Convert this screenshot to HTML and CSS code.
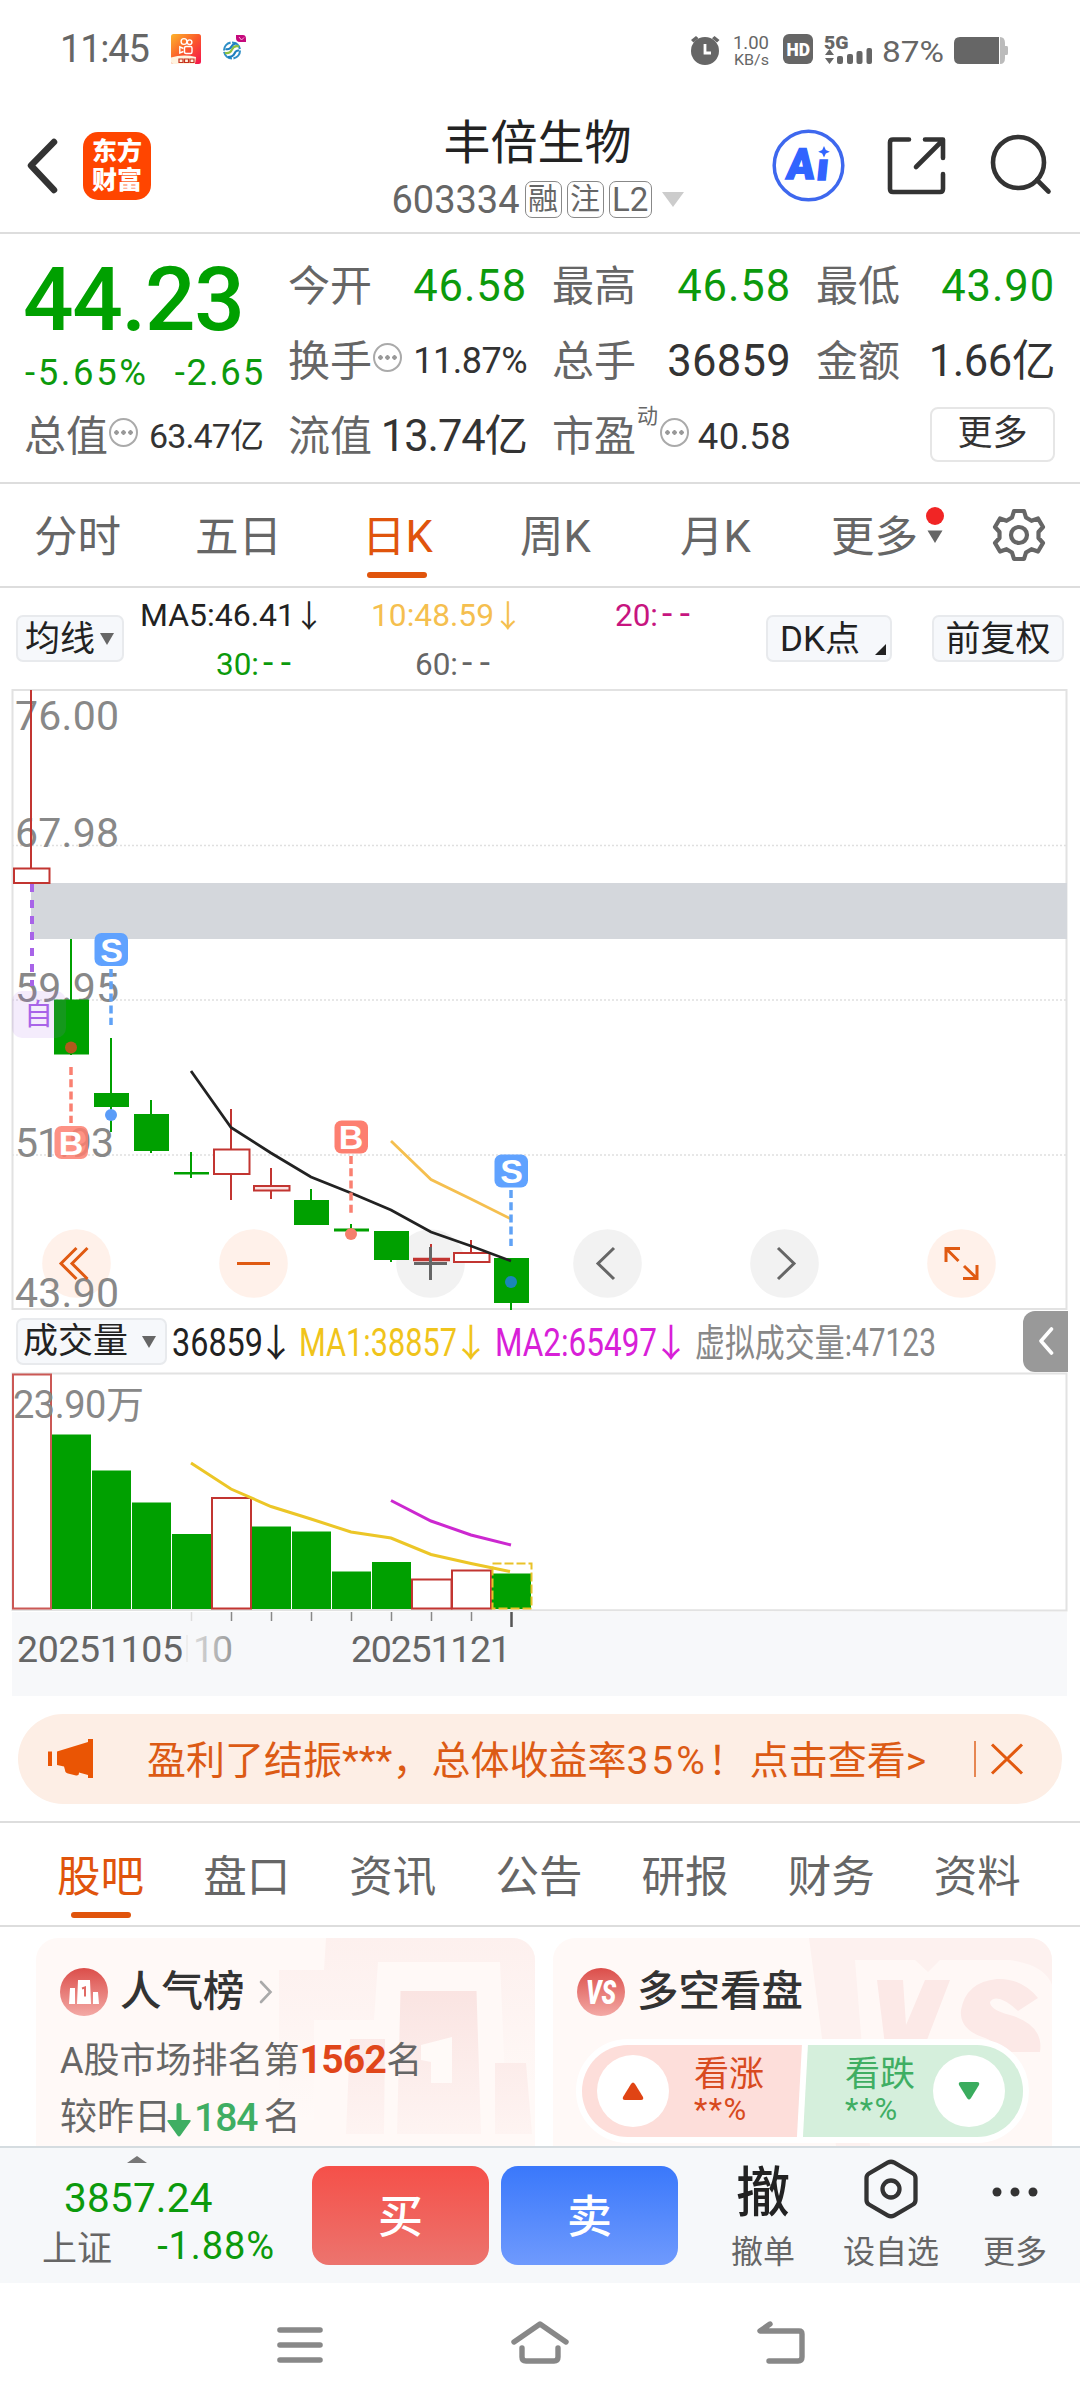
FILE: index.html
```html
<!DOCTYPE html>
<html lang="zh-CN">
<head>
<meta charset="utf-8">
<title>丰倍生物 603334</title>
<link rel="stylesheet" href="styles.css">
</head>
<body>
<div class="app">

<div class="status">
  <span class="clock">11:45</span>
  <svg class="st-app" width="30" height="30" viewBox="0 0 30 30">
    <defs><linearGradient id="ks" x1="0" y1="0" x2="1" y2="1"><stop offset="0" stop-color="#fdb52c"/><stop offset=".5" stop-color="#fb5a2a"/><stop offset="1" stop-color="#f5124e"/></linearGradient></defs>
    <rect width="30" height="30" rx="2.5" fill="url(#ks)"/>
    <g fill="none" stroke="#fff" stroke-width="1.4"><circle cx="13" cy="7.5" r="2.9"/><circle cx="18.6" cy="8.2" r="2.3"/><rect x="13.5" y="12.5" width="7.5" height="7" rx="1.5"/><path d="M12.500 14.500 L8.800 12.800 V19 L12.500 17.500"/></g>
    <path d="M0 23.500 Q12 20 25 23 L24 30 H2.500 Q0 30 0 27.500Z" fill="#fff3e0"/>
    <path d="M8 25h4v3.500h-4zM13.500 25h4v3.500h-4zM19 25h4v3.500h-4z" fill="none" stroke="#c5311c" stroke-width="1.2"/>
  </svg>
  <svg class="st-cm" width="26" height="26" viewBox="0 0 26 26">
    <g fill="none" stroke-width="2.100"><circle cx="10" cy="15.500" r="8" stroke="#2f8fc6" stroke-dasharray="11 1.500"/><path d="M3 18q5 1 7-3.500t7-3" stroke="#8cc043"/><path d="M3.500 14q4 1 6-2.500t5-3M6 22q5 0 6.500-3.500t4.500-3" stroke="#1d7fc0"/></g>
    <path d="M14 0h7q3 0 3 4v3h-6q-4 0-4-4z" fill="#c5097c"/><path d="M17 2l2.500 3 2.500-2.500" stroke="#f7b6dc" fill="none"/>
  </svg>
  <svg class="st-right" width="330" height="40" viewBox="685 30 330 40">
    <g fill="#666">
      <circle cx="705" cy="51" r="14"/><path d="M691 40l5-4 2.500 2.300-5 4.200zM719.500 40l-5-4-2.500 2.300 5 4.200z"/>
      <path d="M705 44v9h6" stroke="#fff" stroke-width="2.800" fill="none"/>
      <text x="733" y="49" font-size="18.500" textLength="36" lengthAdjust="spacingAndGlyphs">1.00</text>
      <text x="734" y="65" font-size="15.500" textLength="35" lengthAdjust="spacingAndGlyphs">KB/s</text>
      <rect x="783" y="34" width="30" height="30" rx="6"/>
      <text x="786.500" y="56" font-size="19" font-weight="900" fill="#fff" textLength="23.500" lengthAdjust="spacingAndGlyphs">HD</text>
      <text x="824" y="48.500" font-size="19" font-weight="900" textLength="24.500" lengthAdjust="spacingAndGlyphs">5G</text>
      <path d="M829.500 49l4.500 6h-9zM829.500 64l4.500-6h-9z"/>
      <rect x="837" y="56" width="6" height="8" rx="2"/><rect x="847" y="54" width="6" height="10" rx="2"/><rect x="856.500" y="51" width="6" height="13" rx="2"/><rect x="866.500" y="48" width="5.500" height="16" rx="2"/>
      <text x="882" y="62" font-size="30" textLength="62" lengthAdjust="spacingAndGlyphs">87%</text>
      <path d="M1000 37q5 0 5 6v3h2q1 0 1 2v5q0 2-1 2h-2v3q0 6-5 6z" fill="#bbb"/>
      <path d="M960 37h39v27h-39q-6 0-6-6v-15q0-6 6-6z"/>
    </g>
  </svg>
</div>

<header class="head">
  <svg class="back" width="34" height="56" viewBox="0 0 34 56"><path d="M29 4L6 27.500 29 52" fill="none" stroke="#333" stroke-width="6.500" stroke-linecap="round" stroke-linejoin="round"/></svg>
  <div class="logo"><span>东方</span><span>财富</span></div>
  <div class="title">
    <h1>丰倍生物</h1>
    <div class="code"><span class="num">603334</span><i>融</i><i>注</i><i class="l2">L2</i><b class="tri"></b></div>
  </div>
  <svg class="head-icons" width="290" height="80" viewBox="765 127 290 80">
    <circle cx="808.500" cy="166.500" r="34.300" fill="#fff" stroke="#3e68ee" stroke-width="3.500"/>
    <g fill="#3164ff" stroke="#3164ff" stroke-width="1.500" font-weight="900" transform="translate(0 180) skewX(-6)"><text x="785.500" y="0" font-size="43" textLength="28" lengthAdjust="spacingAndGlyphs">A</text><text x="815.500" y="1" font-size="38" textLength="12" lengthAdjust="spacingAndGlyphs">ı</text></g>
    <path d="M824 147l1.800 4 4 1.800-4 1.800-1.800 4-1.800-4-4-1.800 4-1.800z" fill="#3164ff"/>
    <g fill="none" stroke="#333" stroke-width="4.600" stroke-linecap="round" stroke-linejoin="round">
      <path d="M909 140.500H893q-3 0-3 3V190q0 3 3 3H940q3 0 3-3V175M925 140.500H943V159M942 142L916 168"/>
      <circle cx="1018.500" cy="163.500" r="25.500"/><path d="M1037 181l11.500 11.500"/>
    </g>
  </svg>
</header>

<section class="quote">
  <div class="qcol">
    <div class="big">44.23</div>
    <div class="chg"><span class="pct">-5.65%</span><span>-2.65</span></div>
    <div class="q last"><label>总值</label><u></u><span class="v s34">63.47亿</span></div>
  </div>
  <div class="qcol">
    <div class="q"><label>今开</label><span class="v g">46.58</span></div>
    <div class="q"><label>换手</label><u></u><span class="v s36">11.87%</span></div>
    <div class="q"><label>流值</label><span class="v tight">13.74亿</span></div>
  </div>
  <div class="qcol">
    <div class="q"><label>最高</label><span class="v g">46.58</span></div>
    <div class="q"><label>总手</label><span class="v">36859</span></div>
    <div class="q"><label>市盈</label><sup>动</sup><u></u><span class="v s37">40.58</span></div>
  </div>
  <div class="qcol">
    <div class="q"><label>最低</label><span class="v g">43.90</span></div>
    <div class="q"><label>金额</label><span class="v amt">1.66亿</span></div>
    <div class="q"><button class="more">更多</button></div>
  </div>
</section>

<nav class="ktabs">
  <span>分时</span><span>五日</span><span class="on">日K</span><span>周K</span><span>月K</span>
  <span class="kmore">更多<svg width="18" height="40" viewBox="0 0 18 40"><circle cx="9" cy="10" r="9" fill="#f12525"/><path d="M1.500 24.500h15L9 37z" fill="#666"/></svg></span>
  <svg class="gear" width="56" height="56" viewBox="-28 -28 56 56"><g fill="none" stroke="#666" stroke-width="4.200" stroke-linejoin="round"><path d="M-5-24H5L7-17.500 12.500-14.200 19-16.500 24-8 19.500-3V3L24 8 19 16.500 12.500 14.200 7 17.500 5 24H-5L-7 17.500-12.500 14.200-19 16.500-24 8-19.500 3V-3L-24-8-19-16.500-12.500-14.200-7-17.500z"/><circle r="8"/></g></svg>
</nav>

<div class="marow">
  <button class="chip c1">均线<b class="dn"></b></button>
  <svg class="legend" width="642" height="101" viewBox="124 588 642 101" font-size="31">
    <text x="140" y="626" fill="#222" textLength="155" lengthAdjust="spacingAndGlyphs">MA5:46.41</text><text class="arw" x="309" y="627" fill="#222">↓</text>
    <text x="371" y="626" fill="#f5bf4f" textLength="123" lengthAdjust="spacingAndGlyphs">10:48.59</text><text class="arw" x="508" y="627" fill="#f5bf4f">↓</text>
    <g fill="#c7157f"><text x="615" y="626" textLength="43" lengthAdjust="spacingAndGlyphs">20:</text><text x="662" y="626" textLength="28" lengthAdjust="spacing" font-size="37">--</text></g>
    <g fill="#0c9a0c"><text x="216" y="675" textLength="43" lengthAdjust="spacingAndGlyphs">30:</text><text x="263" y="675" textLength="28" lengthAdjust="spacing" font-size="37">--</text></g>
    <g fill="#666"><text x="415" y="675" textLength="43" lengthAdjust="spacingAndGlyphs">60:</text><text x="462" y="675" textLength="28" lengthAdjust="spacing" font-size="37">--</text></g>
  </svg>
  <button class="chip c2">DK点<b class="corner"></b></button>
  <button class="chip c3">前复权</button>
</div>

<svg class="chart" width="1080" height="621" viewBox="0 689 1080 621">
  <g fill="none" stroke="#e2e2e2" stroke-width="2"><path d="M12.500 1309V690H1066.500V1309z"/></g>
  <path d="M12 845.500H1067M12 1000H1067M12 1155H1067" stroke="#e0e0e0" stroke-width="1.500" stroke-dasharray="2 2"/>
  <rect x="31" y="883" width="1036" height="56" fill="#d4d7dc"/>
  <g fill="#fff1ea"><circle cx="76.500" cy="1263.500" r="34.300"/><circle cx="253.500" cy="1263.500" r="34.300"/><circle cx="961.500" cy="1263.500" r="34.300"/></g>
  <g fill="#f2f2f2"><circle cx="430.500" cy="1263.500" r="34.300"/><circle cx="607.500" cy="1263.500" r="34.300"/><circle cx="784.500" cy="1263.500" r="34.300"/></g>
  <g fill="#888" font-size="41">
    <text x="15" y="730" textLength="104">76.00</text><text x="15" y="847" textLength="104">67.98</text><text x="15" y="1002" textLength="104">59.95</text><text x="15" y="1157" textLength="99">51.93</text><text x="15" y="1307" textLength="104">43.90</text>
  </g>
  <g stroke="#00a000" stroke-width="2">
    <path d="M71 939V1055M111 1038V1132M151 1100V1153M191 1152V1178M311 1189V1225M351 1224V1237M391 1231V1262M511 1258V1310" fill="none"/>
  </g>
  <g fill="#00a000">
    <rect x="54" y="999.500" width="35" height="55"/><rect x="94" y="1093" width="35" height="14"/><rect x="134" y="1114" width="35" height="37"/><rect x="174" y="1172" width="35" height="2.500"/><rect x="294" y="1200" width="35" height="25"/><rect x="334" y="1228.500" width="35" height="3"/><rect x="374" y="1231" width="35" height="29"/><rect x="494" y="1258" width="35" height="45"/>
  </g>
  <g stroke="#c23531" stroke-width="2" fill="none">
    <path d="M31 690V868M231 1109V1149M231 1174V1200M271 1168V1185M271 1190V1199M431 1244V1260M471 1240V1252"/>
    <rect x="14" y="868.500" width="35.500" height="14.500" fill="#fff"/><rect x="214" y="1149.500" width="35.500" height="24.500" fill="#fff"/><rect x="254" y="1186" width="35.500" height="4.500" fill="#fbe3e3"/><rect x="454" y="1253" width="35.500" height="9" fill="#fff"/><path d="M413 1259.500H450" stroke-width="3.500"/>
  </g>
  <path d="M191 1071L231 1127.500 271 1153 311 1177 351 1193 391 1210 431 1232 471 1246 511 1261" fill="none" stroke="#222" stroke-width="2.800"/>
  <path d="M391 1141L431 1179.500 471 1199 511 1219" fill="none" stroke="#f5bf4f" stroke-width="2.800"/>
  <rect x="12" y="991" width="54" height="47" rx="10" fill="#a864e8" fill-opacity=".12"/>
  <text x="24" y="1025" font-size="29" fill="#a864e8">自</text>
  <path d="M32 884V986" stroke="#a864e8" stroke-width="4" stroke-dasharray="8 8" fill="none"/>
  <path d="M71 1067V1123M351 1156V1213" stroke="#fa8071" stroke-width="3.500" stroke-dasharray="8 4.200" fill="none"/>
  <path d="M111 969V1025M511 1190V1246" stroke="#60a2f6" stroke-width="3.500" stroke-dasharray="8 4.200" fill="none"/>
  <circle cx="71" cy="1047.500" r="6" fill="#b05a1c"/><circle cx="111" cy="1115" r="6" fill="#5a9cf8"/><circle cx="351" cy="1234" r="6" fill="#f4806c"/><circle cx="511" cy="1282" r="6" fill="#1a86b8"/>
  <g fill="#fd7f70"><rect x="54.500" y="1126" width="33.500" height="33" rx="7" fill-opacity=".85"/><rect x="334.500" y="1120.500" width="33.500" height="33" rx="7"/></g>
  <g fill="#60a2ff"><rect x="94.500" y="933" width="33.500" height="33" rx="7"/><rect x="494.500" y="1154.500" width="33.500" height="33" rx="7"/></g>
  <g fill="#fff" font-size="34" font-weight="700" font-family="Liberation Sans, sans-serif" text-anchor="middle">
    <text x="71" y="1154.500">B</text><text x="351" y="1149">B</text><text x="111.500" y="961.500">S</text><text x="511.500" y="1183">S</text>
  </g>
  <g fill="none" stroke="#e05a12" stroke-width="3">
    <path d="M76.500 1248L61 1263.500 76.500 1279M87.500 1248L72 1263.500 87.500 1279M237 1263.500H270M946 1262V1248.500H960M947 1249.500L958.500 1261M977 1265V1278.500H963M976 1277.500L964 1266"/>
  </g>
  <g fill="none" stroke="#666" stroke-width="3"><path d="M414 1263.500H447M430.500 1247V1280M614 1248L598 1263.500 614 1279M778 1248L794 1263.500 778 1279"/></g>
</svg>

<div class="volhead">
  <button class="chip c4">成交量<b class="dn"></b></button>
  <svg width="856" height="62" viewBox="167 1310 856 62" font-size="38">
    <text x="172" y="1356" fill="#222" textLength="91" lengthAdjust="spacingAndGlyphs">36859</text><text class="arw" x="276" y="1356" fill="#222">↓</text>
    <text x="299" y="1356" fill="#f0c41b" textLength="158" lengthAdjust="spacingAndGlyphs">MA1:38857</text><text class="arw" x="471" y="1356" fill="#f0c41b">↓</text>
    <text x="495" y="1356" fill="#d820d8" textLength="162" lengthAdjust="spacingAndGlyphs">MA2:65497</text><text class="arw" x="671" y="1356" fill="#d820d8">↓</text>
    <text x="695" y="1356" fill="#888" textLength="241" lengthAdjust="spacingAndGlyphs">虚拟成交量:47123</text>
  </svg>
  <div class="fold"><svg width="16" height="28" viewBox="0 0 16 28"><path d="M13.500 2L3 14l10.500 12" fill="none" stroke="#fff" stroke-width="3.600" stroke-linecap="round" stroke-linejoin="round"/></svg></div>
</div>

<svg class="chart" width="1080" height="326" viewBox="0 1372 1080 326">
  <defs><linearGradient id="fade" x1="0" x2="1" y1="0" y2="0"><stop offset="0" stop-color="#ddd"/><stop offset="1" stop-color="#999"/></linearGradient></defs>
  <rect x="12" y="1612" width="1055" height="84" fill="#f7f8fa"/>
  <path d="M12.500 1610V1373.500H1066.500V1610.500z" fill="none" stroke="#e2e2e2" stroke-width="2"/>
  <g fill="#00a000"><rect x="52" y="1434.500" width="39" height="174.500"/><rect x="92" y="1470.500" width="39" height="138.500"/><rect x="132" y="1502.500" width="39" height="106.500"/><rect x="172" y="1534" width="39" height="75"/><rect x="252" y="1526.500" width="39" height="82.500"/><rect x="292" y="1531.500" width="39" height="77.500"/><rect x="332" y="1571.500" width="39" height="37.500"/><rect x="372" y="1562" width="39" height="47"/><rect x="492" y="1573.500" width="39" height="35.500"/></g>
  <g fill="#fff" stroke="#c23531" stroke-width="2"><rect x="13" y="1374.500" width="38" height="234" stroke="#cb5855"/><rect x="212" y="1498" width="39" height="110.500"/><rect x="412" y="1579.500" width="39.500" height="29"/><rect x="452" y="1570.500" width="39" height="38"/></g>
  <rect x="492.500" y="1563.500" width="39" height="45" fill="none" stroke="#e9c229" stroke-width="2" stroke-dasharray="9 3"/>
  <path d="M191 1463L231 1489 271 1506.500 311 1519 351 1532 391 1538 431 1554.500 471 1563.500 510 1571.500" fill="none" stroke="#ecc627" stroke-width="3"/>
  <path d="M391 1500.500L431 1521 471 1535 511 1545" fill="none" stroke="#cc28d0" stroke-width="3"/>
  <text x="13" y="1418" font-size="38" fill="#888" textLength="131">23.90万</text>
  <path d="M231.500 1612V1621M271.500 1612V1621M311.500 1612V1621M351.500 1612V1621M391.500 1612V1621M431.500 1612V1621M471.500 1612V1621" stroke="#888" stroke-width="1.500"/>
  <path d="M191.500 1612V1621" stroke="#ddd" stroke-width="1.500"/><path d="M511.500 1612V1627" stroke="#555" stroke-width="2.500"/>
  <g font-size="37.500" fill="#666"><text x="17" y="1662" textLength="166">20251105</text><text x="351" y="1662" textLength="160">20251121</text><text x="193" y="1662" textLength="40" fill="url(#fade)">10</text></g>
  <path d="M187 1635V1662" stroke="#eee" stroke-width="2"/>
</svg>

<div class="banner">
  <svg class="horn" width="46" height="40" viewBox="0 0 46 40"><path d="M0 12.500h4v14.500H0zM9 12.500L40 3V0h5v39h-5v-3l-9-2.500V34q0 3-3 2.500l-8-2q-3-.8-3-3.500l-1-3.500-7-1.500z" fill="#ea5504"/></svg>
  <p>盈利了结振***，总体收益率<b>35%！</b>点击查看&gt;</p>
  <i></i>
  <svg width="34" height="32" viewBox="0 0 34 32"><path d="M2 1.500l30 29M32 1.500L2 30.500" stroke="#e2590f" stroke-width="3" fill="none"/></svg>
</div>

<nav class="itabs"><span class="on">股吧</span><span>盘口</span><span>资讯</span><span>公告</span><span>研报</span><span>财务</span><span>资料</span></nav>

<div class="cards">
  <article class="card">
    <svg class="wm" width="499" height="208" viewBox="36 1938 499 208">
      <defs><linearGradient id="wf" x1="0" y1="0" x2="0" y2="1"><stop offset="0" stop-color="#fdf0ee"/><stop offset="1" stop-color="#fffaf8"/></linearGradient><linearGradient id="wg" x1="0" y1="0" x2="0" y2="1"><stop offset="0" stop-color="#fae4e2"/><stop offset="1" stop-color="#fef4f2"/></linearGradient></defs>
      <path d="M326 1938H535V2080H505L500 1962H378L374 2020H314V2120H279V1970H324z" fill="url(#wf)"/>
      <path d="M400.500 1991H476.500L481 2134H397zM350 2039H385L384 2134H346zM495 2063H526L532 2134H495z" fill="url(#wg)"/>
      <path d="M421 2045L452 2037V2083H431V2062L421 2060z" fill="#fffaf8"/>
    </svg>
    <h2><svg width="48" height="48" viewBox="-24 -24 48 48"><defs><linearGradient id="ic" x1="0" y1="0" x2="0" y2="1"><stop offset="0" stop-color="#db4e4a"/><stop offset="1" stop-color="#f3a9a5"/></linearGradient></defs><circle r="24" fill="url(#ic)"/><path d="M-6-12H6L7 12H-7zM-14-4H-9V12H-15zM9 0H14L15 12H9z" fill="#fff"/><path d="M-2-3.500L1-4.500V4.500" fill="none" stroke="#e06a65" stroke-width="2"/></svg>人气榜<svg class="gt" width="14" height="24" viewBox="0 0 14 24"><path d="M2 2l9.500 10L2 22" fill="none" stroke="#aaa" stroke-width="2.600" stroke-linecap="round"/></svg></h2>
    <p class="p1">A股市场排名第<b class="num">1562</b>名</p>
    <p class="p2">较昨日<svg width="24" height="34" viewBox="0 0 24 34"><path d="M9.500 1.500q0-1.500 2.500-1.500t2.500 1.500V17H22.500q2 0 .8 1.800L13.500 32.500q-1.500 2-3 0L.7 18.800Q-.5 17 1.500 17h8z" fill="#3fae63"/></svg><b>184</b>名</p>
  </article>
  <article class="card">
    <svg class="wm" width="499" height="208" viewBox="553 1938 499 208">
      <path d="M809 1938H1052V2146H836z" fill="#fdf1ef"/>
      <path d="M855 1960H915L928 1972 940 1960H1010Q1045 1965 1052 1985V2146H870z" fill="#fff8f6"/>
      <path d="M877 1980H903L906 2025 925 1980H950L925 2045H885z" fill="#fce9e7"/>
      <path d="M1038 1998Q1022 1978 997 1979Q966 1982 961 2010Q959 2030 985 2038Q1000 2044 1000 2052H1040Q1044 2025 1010 2015Q990 2010 990 2002Q997 1992 1018 2011z" fill="#fce9e7"/>
    </svg>
    <h2><svg width="48" height="48" viewBox="-24 -24 48 48"><circle r="24" fill="url(#ic)"/><text x="-15" y="12" font-size="33" font-weight="900" font-style="italic" fill="#fff" textLength="30" lengthAdjust="spacingAndGlyphs">VS</text></svg>多空看盘</h2>
    <div class="vs">
      <div class="up"><em><svg width="24" height="20" viewBox="0 0 24 20"><path d="M12 1.500q1 0 2 1.500l8 13q1 3-2 3H4q-3 0-2-3l8-13q1-1.500 2-1.500z" fill="#e04414"/></svg></em><div><span>看涨</span><small>**%</small></div></div>
      <div class="down"><div><span>看跌</span><small>**%</small></div><em><svg width="24" height="20" viewBox="0 0 24 20"><path d="M12 18.500q1 0 2-1.500l8-13q1-3-2-3H4q-3 0-2 3l8 13q1 1.500 2 1.500z" fill="#3aac5e"/></svg></em></div>
    </div>
  </article>
</div>

<footer class="bar">
  <div class="index">
    <b class="upt"></b>
    <div class="pt">3857.24</div>
    <div class="ix"><span>上证</span><span class="pc">-1.88%</span></div>
  </div>
  <button class="trade buy">买</button>
  <button class="trade sell">卖</button>
  <div class="act a1"><strong>撤</strong><span>撤单</span></div>
  <div class="act a2"><svg width="56" height="62" viewBox="-28 -31 56 62"><g fill="none" stroke="#333" stroke-width="4.300"><path d="M-3-26.500Q0-28 3-26.500L22-15.500Q24.500-14 24.500-11V11Q24.500 14 22 15.500L3 26.500Q0 28-3 26.500L-22 15.500Q-24.500 14-24.500 11V-11Q-24.500-14-22-15.500z"/><circle r="8.500"/></g></svg><span>设自选</span></div>
  <div class="act a3"><svg width="56" height="62" viewBox="-28 -31 56 62"><g fill="#333"><circle cx="-18" cy="3" r="4.500"/><circle cy="3" r="4.500"/><circle cx="18" cy="3" r="4.500"/></g></svg><span>更多</span></div>
</footer>

<div class="sysnav">
  <svg width="48" height="40" viewBox="0 0 48 40"><path d="M4 5H44M4 20H44M4 35H44" stroke="#888" stroke-width="5.600" stroke-linecap="round"/></svg>
  <svg width="60" height="46" viewBox="0 0 60 46"><path d="M4 23L30 5 56 23M12 29V38Q12 42 16 42H44Q48 42 48 38V29" fill="none" stroke="#888" stroke-width="5.400" stroke-linecap="round" stroke-linejoin="round"/></svg>
  <svg width="50" height="44" viewBox="0 0 50 44"><path d="M14 3L4 10H43Q46 10 46 13V36Q46 40 42 40H13" fill="none" stroke="#888" stroke-width="5.400" stroke-linecap="round" stroke-linejoin="round"/></svg>
</div>

</div>
</body>
</html>
```
FILE: styles.css
```css
* { box-sizing: border-box; margin: 0; padding: 0; }
body { background: #fff; font-family: Roboto, "Noto Sans CJK SC", sans-serif; color: #333; }
.app { width: 1080px; height: 2408px; overflow: hidden; display: flex; flex-direction: column; }
.app > * { flex: none; }
svg { display: block; flex: none; }
button { font: inherit; color: inherit; border: 0; background: none; }
i, em, u { font-style: normal; text-decoration: none; }
.arw { font-family: "Noto Sans CJK SC", sans-serif; text-anchor: middle; }

.status { height: 98px; display: flex; align-items: flex-start; padding-left: 60px; }
.clock { width: 111px; font-size: 38px; line-height: 98px; letter-spacing: -1.2px; color: #666; }
.st-app { margin-top: 34px; }
.st-cm { margin: 35px 0 0 21px; }
.st-right { margin: 30px 0 0 437px; }

.head { height: 136px; display: flex; align-items: center; padding: 2px 25px 0; border-bottom: 2px solid #ddd; }
.logo { width: 68px; height: 68px; margin-left: 24px; border-radius: 15px; background: #ff4500; color: #fff; font-size: 25px; font-weight: 900; line-height: 29px; padding-top: 5px; text-align: center; }
.logo span { display: block; }
.title { flex: 1; padding: 2px 0 0 136px; text-align: center; }
.title h1 { font-size: 47px; font-weight: 400; line-height: 58px; color: #222; padding-left: 23px; }
.code { display: flex; align-items: center; justify-content: center; height: 44px; gap: 5px; padding: 3px 0 0 23px; margin-top: 4px; color: #666; white-space: nowrap; }
.code .num { font-size: 38px; letter-spacing: 0; }
.code i { flex: none; height: 37px; width: 37px; border: 1.500px solid #888; border-radius: 7px; font-size: 30px; line-height: 33px; }
.code .l2 { width: 43px; font-size: 33px; line-height: 35px; }
.tri { border: 11px solid transparent; border-top: 15px solid #ccc; border-bottom: 0; margin-left: 5px; }

.quote { height: 250px; display: flex; gap: 26px; padding: 15px 25px 0; border-bottom: 2px solid #ddd; white-space: nowrap; }
.qcol { width: 238px; }
.big { height: 100px; line-height: 102px; font-size: 89px; font-weight: 500; color: #00a000; letter-spacing: -1.3px; margin-left: -2px; }
.chg { height: 48px; line-height: 48px; font-size: 36.500px; color: #0c9a0c; display: flex; justify-content: space-between; letter-spacing: 1.800px; margin-right: -2px; }
.chg .pct { letter-spacing: 2.600px; }
.q { height: 75px; display: flex; align-items: center; line-height: 75px; }
.q.last { height: 78px; }
.q label { font-size: 42px; color: #666; margin-left: -1px; }
.q .v { margin-left: auto; font-size: 43.500px; color: #333; letter-spacing: .3px; }
.q .g { color: #0c9a0c; letter-spacing: .9px; }
.q .tight { letter-spacing: -1.100px; }
.q .amt { letter-spacing: -.4px; }
.q .s34 { font-size: 34px; letter-spacing: -.9px; }
.q .s36 { font-size: 36px; letter-spacing: -.5px; }
.q .s37 { font-size: 36.500px; }
.q u { flex: none; width: 29px; height: 29px; border: 2px solid #aaa; border-radius: 50%; margin: -8px 0 0 1px; background: radial-gradient(circle, #999 2px, transparent 2.500px) center / 7px 7px repeat-x; background-clip: content-box; padding: 0 2px; }
.q sup { font-size: 21px; line-height: 24px; align-self: flex-start; margin: 5px 1px 0 1px; color: #666; }
.more { width: 125px; height: 55px; margin: -5px 0 0 auto; border: 2px solid #e6e6e6; border-radius: 8px; font-size: 35px; line-height: 50px; color: #333; }

.ktabs { height: 104px; border-bottom: 2px solid #ddd; display: flex; align-items: center; font-size: 43.500px; color: #666; padding-left: 34px; }
.ktabs > span { width: 161px; line-height: 102px; padding-top: 6px; position: relative; }
.ktabs > span:nth-child(3) { width: 156px; padding-left: 6px; }
.ktabs > span:nth-child(4) { width: 160px; padding-left: 8px; }
.ktabs > span:nth-child(5) { width: 158px; padding-left: 8px; }
.on { color: #e0540c; }
.ktabs .on::after, .itabs .on::after { content: ""; position: absolute; height: 6px; width: 60px; border-radius: 3px; background: #e0540c; }
.ktabs .on::after { left: 11px; top: 91px; }
.ktabs .kmore { display: flex; padding-left: 1px; }
.kmore svg { margin: 19px 0 0 8px; }

.marow { height: 101px; display: flex; align-items: center; padding-left: 16px; }
.chip { height: 47px; line-height: 45px; padding-top: 1px; border: 2px solid #e8eaed; border-radius: 7px; background: #f6f8fb; font-size: 35px; color: #222; display: flex; align-items: center; position: relative; white-space: nowrap; }
.dn { border: 7.500px solid transparent; border-top: 12px solid #666; border-bottom: 0; }
.c1 { width: 108px; padding-left: 7px; gap: 5px; }
.c2 { width: 126px; padding-left: 12px; }
.c3 { width: 132px; margin-left: 40px; justify-content: center; }
.c4 { width: 151px; margin-left: 16px; padding-left: 5px; gap: 14px; }
.corner { position: absolute; right: 4px; bottom: 5px; border-left: 11px solid transparent; border-bottom: 11px solid #222; }

.volhead { height: 62px; display: flex; align-items: center; }
.fold { width: 45px; height: 61px; background: #999; border-radius: 12px 0 0 12px; display: flex; align-items: center; justify-content: center; }

.banner { height: 90px; margin: 16px 18px 0; border-radius: 45px; background: #fdeee5; color: #dc5a14; display: flex; align-items: center; padding-left: 30px; font-size: 39px; white-space: nowrap; }
.banner p { margin: -5px 0 0 53px; width: 827px; }
.banner b { font-weight: 400; letter-spacing: 3px; }
.banner i { width: 2px; height: 36px; background: #dc5a14; margin-right: 14px; opacity: .7; }

.itabs { height: 106px; margin-top: 17px; border: solid #ddd; border-width: 2px 0; display: flex; padding-left: 57px; font-size: 43.500px; line-height: 110px; color: #666; }
.itabs span { width: 146.300px; position: relative; }
.itabs .on::after { left: 14px; top: 89px; }

.cards { height: 219px; display: flex; gap: 18px; padding: 11px 0 0 36px; overflow: hidden; }
.card { flex: none; width: 499px; height: 230px; border-radius: 22px; background: #fff9f7; position: relative; overflow: hidden; padding: 0 24px; }
.wm { position: absolute; left: 0; top: 0; }
.card h2 { position: relative; margin-top: 24px; height: 60px; display: flex; align-items: center; font-size: 41.500px; font-weight: 500; line-height: 60px; color: #333; gap: 12px; }
.gt { margin-left: 2px; }
.card p { position: relative; font-size: 36px; color: #666; white-space: nowrap; line-height: 56px; height: 56px; }
.card .p1 { margin-top: 10px; }
.p1 b { font-size: 39px; color: #e0461a; letter-spacing: -.7px; }
.card .p2 { display: flex; align-items: center; font-size: 37px; margin-top: 2px; }
.p2 svg { margin: 4px 3px 0 -4px; }
.p2 b { font-size: 39px; color: #3fae63; font-weight: 500; margin-right: 6px; letter-spacing: -1px; }
.vs { position: relative; display: flex; width: 453px; height: 104px; margin: 17px 0 0 -1px; border: 6px solid #fff; border-radius: 52px; overflow: hidden; background: #fff; }
.up, .down { height: 92px; display: flex; align-items: center; }
.up { width: 221px; background: #fddeda; clip-path: polygon(0 0, 100% 0, calc(100% - 5px) 100%, 0 100%); color: #d84a20; padding-left: 15px; gap: 25px; }
.down { width: 221px; margin-left: 1px; background: #d5efdc; clip-path: polygon(5px 0, 100% 0, 100% 100%, 0 100%); color: #3fae63; padding-left: 42px; gap: 18px; }
.vs em { width: 72px; height: 72px; background: #fff; border-radius: 50%; display: flex; align-items: center; justify-content: center; flex: none; }
.vs span { display: block; font-size: 35px; line-height: 42px; white-space: nowrap; }
.vs small { display: block; font-size: 31px; line-height: 34px; height: 36px; margin-top: -3px; letter-spacing: 1.4px; }

.bar { height: 137px; border-top: 2px solid #d5dce0; background: #f6f8fa; display: flex; position: relative; }
.index { width: 312px; padding-left: 42px; }
.upt { display: block; width: 0; border: 10.500px solid transparent; border-bottom: 7px solid #777; border-top: 0; margin: 8px 0 0 85px; }
.pt { margin: 11px 0 0 22px; font-size: 40.500px; line-height: 48px; color: #0c9a0c; letter-spacing: .2px; }
.ix { display: flex; align-items: center; justify-content: space-between; width: 233px; height: 50px; font-size: 35px; color: #666; margin-top: -2px; }
.pc { font-size: 38px; color: #0c9a0c; letter-spacing: .9px; margin-top: 2px; }
.trade { width: 177px; height: 99px; margin-top: 18px; border-radius: 17px; color: #fff; font-size: 45px; font-weight: 500; line-height: 103px; }
.buy { background: linear-gradient(#f55049, #ec746e); margin-right: 12px; }
.sell { background: linear-gradient(#3a78fb, #6f9afd); }
.act { display: flex; flex-direction: column; align-items: center; width: 120px; padding-top: 10px; color: #666; font-size: 32px; line-height: 40px; }
.act strong { font-size: 54px; line-height: 72px; height: 62px; font-weight: 500; color: #222; }
.act span { margin-top: 12px; white-space: nowrap; }
.a1 { margin-left: 25px; }
.a2 { margin-left: 8px; }
.a3 { margin-left: 4px; }

.sysnav { height: 125px; display: flex; align-items: flex-start; padding: 42px 0 0 276px; }
.sysnav svg:nth-child(1) { margin-top: 0; }
.sysnav svg:nth-child(2) { margin: -6px 0 0 186px; }
.sysnav svg:nth-child(3) { margin: -4px 0 0 186px; }
```
